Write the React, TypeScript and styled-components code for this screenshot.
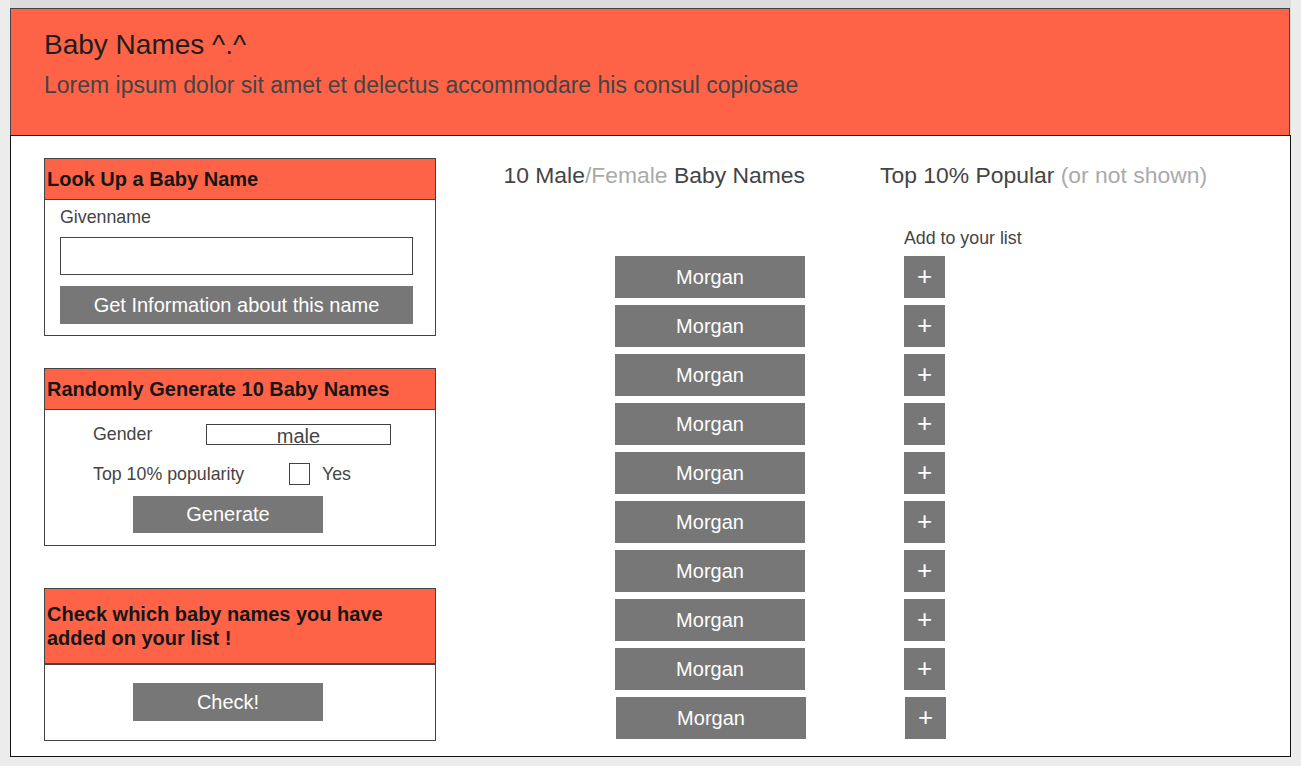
import React from 'react'
import styled, { createGlobalStyle } from 'styled-components'

const GlobalStyle = createGlobalStyle`
  html, body {
    margin: 0;
    padding: 0;
    background: #ececec;
    font-family: "Liberation Sans", Arial, sans-serif;
  }
`

const names = Array.from({ length: 10 }, () => 'Morgan')

const App = () => {
  return (
    <>
      <GlobalStyle />
      <Frame>
        <Header>
          <Title>Baby Names ^.^</Title>
          <Subtitle>Lorem ipsum dolor sit amet et delectus accommodare his consul copiosae</Subtitle>
        </Header>
        <Main>
          <LeftColumn>
            <Card>
              <CardHeader>Look Up a Baby Name</CardHeader>
              <LookupBody>
                <Label>Givenname</Label>
                <TextInput />
                <WideButton>Get Information about this name</WideButton>
              </LookupBody>
            </Card>

            <Card $gap={32}>
              <CardHeader>Randomly Generate 10 Baby Names</CardHeader>
              <GenerateBody>
                <FormRow>
                  <RowLabel>Gender</RowLabel>
                  <SelectBox>male</SelectBox>
                </FormRow>
                <FormRow>
                  <RowLabel $wide>Top 10% popularity</RowLabel>
                  <CheckBox />
                  <Label>Yes</Label>
                </FormRow>
                <SmallButton>Generate</SmallButton>
              </GenerateBody>
            </Card>

            <Card $gap={42}>
              <CardHeader $tall>Check which baby names you have added on your list !</CardHeader>
              <CheckBody>
                <SmallButton>Check!</SmallButton>
              </CheckBody>
            </Card>
          </LeftColumn>

          <NamesColumn>
            <ColumnTitle>
              10 Male<Muted>/Female</Muted> Baby Names
            </ColumnTitle>
            <ButtonList>
              {names.map((n, i) => (
                <NameButton key={i} $shift={i === 9}>{n}</NameButton>
              ))}
            </ButtonList>
          </NamesColumn>

          <AddColumn>
            <ColumnTitle>
              Top 10% Popular <Muted>(or not shown)</Muted>
            </ColumnTitle>
            <AddLabel>Add to your list</AddLabel>
            <ButtonList>
              {names.map((_, i) => (
                <PlusButton key={i} $shift={i === 9}>+</PlusButton>
              ))}
            </ButtonList>
          </AddColumn>
        </Main>
      </Frame>
    </>
  )
}

export default App

const Frame = styled.div`
  margin-left: 10px;
  width: 1281px;
  padding-top: 8px;
  background: #dcdcdc;
`

const Header = styled.header`
  box-sizing: border-box;
  width: 1280px;
  height: 128px;
  background: #ff6347;
  border: 1px solid #444;
  padding: 18px 0 0 33px;
`

const Title = styled.h1`
  margin: 0;
  font-size: 28px;
  font-weight: normal;
  line-height: 36px;
  color: #1e1e1e;
`

const Subtitle = styled.p`
  margin: 8px 0 0;
  font-size: 23px;
  line-height: 28px;
  color: #444;
`

const Main = styled.main`
  box-sizing: border-box;
  display: flex;
  height: 622px;
  margin-top: -1px;
  background: #fff;
  border: 1px solid #111;
  padding: 22px 0 0 33px;
`

const LeftColumn = styled.div`
  display: flex;
  flex-direction: column;
  width: 392px;
`

const Card = styled.section<{ $gap?: number }>`
  border: 1px solid #444;
  margin-top: ${p => p.$gap || 0}px;
`

const CardHeader = styled.h2<{ $tall?: boolean }>`
  box-sizing: border-box;
  margin: 0;
  display: flex;
  align-items: center;
  height: ${p => (p.$tall ? 76 : 41)}px;
  padding: 0 2px;
  background: #ff6347;
  border-bottom: ${p => (p.$tall ? 2 : 1)}px solid #444;
  font-size: 20px;
  line-height: 24px;
  font-weight: bold;
  color: #161616;
`

const LookupBody = styled.div`
  display: flex;
  flex-direction: column;
  padding: 7px 22px 11px 15px;
`

const Label = styled.span`
  font-size: 17.8px;
  line-height: 20px;
  color: #444;
`

const TextInput = styled.input`
  box-sizing: border-box;
  height: 38px;
  margin-top: 10px;
  border: 1px solid #444;
  border-radius: 0;
  outline: none;
`

const WideButton = styled.div`
  height: 38px;
  margin-top: 11px;
  background: #777;
  color: #fff;
  font-size: 20px;
  line-height: 38px;
  text-align: center;
`

const GenerateBody = styled.div`
  display: flex;
  flex-direction: column;
  padding: 13px 0 12px 48px;
`

const FormRow = styled.div`
  display: flex;
  align-items: center;
  height: 22px;
  & + & {
    margin-top: 18px;
  }
`

const RowLabel = styled(Label)<{ $wide?: boolean }>`
  width: ${p => (p.$wide ? 196 : 113)}px;
  flex: none;
`

const SelectBox = styled.div`
  box-sizing: border-box;
  width: 185px;
  height: 21px;
  border: 1px solid #444;
  overflow: hidden;
  font-size: 20px;
  line-height: 20px;
  padding-top: 1px;
  text-align: center;
  color: #444;
`

const CheckBox = styled.div`
  box-sizing: border-box;
  width: 21px;
  height: 22px;
  border: 1px solid #444;
  margin-right: 12px;
`

const SmallButton = styled.div`
  align-self: flex-start;
  width: 190px;
  height: 37px;
  margin: 11px 0 0 40px;
  background: #777;
  color: #fff;
  font-size: 20px;
  line-height: 37px;
  text-align: center;
`

const CheckBody = styled.div`
  display: flex;
  padding: 7px 0 19px 48px;
  & > ${SmallButton} {
    height: 38px;
    line-height: 38px;
    margin-top: 11px;
  }
`

const NamesColumn = styled.div`
  display: flex;
  flex-direction: column;
  align-items: flex-end;
  width: 301px;
  margin-left: 68px;
`

const ColumnTitle = styled.h3`
  margin: 5px 0 0;
  font-size: 22.9px;
  line-height: 24px;
  font-weight: normal;
  color: #444;
  white-space: nowrap;
`

const Muted = styled.span`
  color: #aaa;
`

const ButtonList = styled.div`
  display: flex;
  flex-direction: column;
  gap: 7px;
  margin-top: 69px;
`

const NameButton = styled.div<{ $shift?: boolean }>`
  width: 190px;
  height: 42px;
  background: #777;
  color: #fff;
  font-size: 20px;
  line-height: 42px;
  text-align: center;
  margin-left: ${p => (p.$shift ? 1 : 0)}px;
  margin-right: ${p => (p.$shift ? -1 : 0)}px;
`

const AddColumn = styled.div`
  display: flex;
  flex-direction: column;
  margin-left: 75px;
  & > ${ButtonList} {
    margin-top: 8px;
    margin-left: 24px;
  }
`

const AddLabel = styled(Label)`
  margin: 41px 0 0 24px;
`

const PlusButton = styled.div<{ $shift?: boolean }>`
  width: 41px;
  height: 42px;
  background: #777;
  color: #fff;
  font-size: 26px;
  line-height: 40px;
  text-align: center;
  margin-left: ${p => (p.$shift ? 1 : 0)}px;
`
